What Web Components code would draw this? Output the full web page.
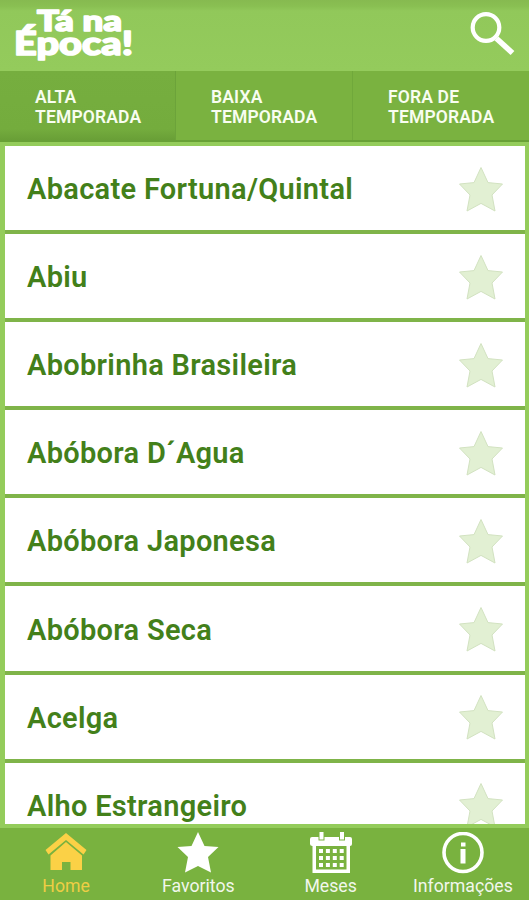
<!DOCTYPE html>
<html lang="pt-BR">
<head>
<meta charset="utf-8">
<title>Tá na Época!</title>
<style>
    body {
        margin: 0;
        font-family: Roboto, "Liberation Sans", sans-serif;
    }
</style>
</head>
<body>
<x-app>
    <x-header slot="top"></x-header>
    <x-tabs slot="top">
        <x-tab active>ALTA<br>TEMPORADA</x-tab>
        <x-tab>BAIXA<br>TEMPORADA</x-tab>
        <x-tab>FORA DE<br>TEMPORADA</x-tab>
    </x-tabs>
    <x-row>Abacate Fortuna/Quintal</x-row>
    <x-row>Abiu</x-row>
    <x-row>Abobrinha Brasileira</x-row>
    <x-row>Abóbora D´Agua</x-row>
    <x-row>Abóbora Japonesa</x-row>
    <x-row>Abóbora Seca</x-row>
    <x-row>Acelga</x-row>
    <x-row>Alho Estrangeiro</x-row>
    <x-nav slot="bottom">
        <x-nav-item icon="home" active>Home</x-nav-item>
        <x-nav-item icon="star">Favoritos</x-nav-item>
        <x-nav-item icon="calendar">Meses</x-nav-item>
        <x-nav-item icon="info">Informações</x-nav-item>
    </x-nav>
</x-app>

<script>
const STAR = 'M22 0.5 L29 15.6 L43.5 17 L33 28 L36 44 L22 36.4 L8 44 L11 28 L0.5 17 L15 15.6 Z';

const ICONS = {
    home: `
        <path d="M22 1 L42.5 18 L39.5 22.4 L22 8 L4.5 22.4 L1.5 18 Z" fill="currentColor"/>
        <path d="M22 10 L38 23.4 V38 H26.5 V30 H18 V38 H6.5 V23.4 Z" fill="currentColor"/>`,
    star: `<path d="M22 0 L28.5 14 L42.5 15 L32 25 L35 40.5 L22 34 L9 40.5 L12 25 L1.5 15 L15.5 14 Z" fill="currentColor"/>`,
    calendar: `
        <path fill="currentColor" fill-rule="evenodd" d="M3 5 H9.5 V8.5 H15.5 V5 H30 V8.5 H36 V5 H41 Q43 5 43 7 V12 Q43 14 41 14 V41 H3.5 V14 Q1 14 1 12 V7 Q1 5 3 5 Z M7 14 V37.5 H37.5 V14 Z"/>
        <path fill="currentColor" d="M10.5 0 H14.5 V7.5 H10.5 Z M31 0 H35 V7.5 H31 Z"/>
        <path stroke="currentColor" stroke-width="4" stroke-dasharray="4 2.9" d="M10 19 H34.7 M10 26 H34.7 M10 33 H34.7"/>`,
    info: `
        <circle cx="22" cy="20.5" r="19" fill="none" stroke="currentColor" stroke-width="3.6"/>
        <path fill="currentColor" d="M20 10.5 H24.5 V14.5 H20 Z M19.5 17 H24.5 V31.5 H19.5 Z"/>`
};

class App extends HTMLElement {
    constructor() {
        super();
        this.attachShadow({ mode: 'open' });
    }
    connectedCallback() {
        this.shadowRoot.innerHTML = `
            <style>
                :host {
                    display: flex;
                    flex-direction: column;
                    height: 900px;
                    overflow: hidden;
                    background: #94cc5b;
                }
                .list {
                    flex: 1;
                    min-height: 0;
                    overflow: hidden;
                    display: flex;
                    flex-direction: column;
                    margin: 4px 4px 4px 5px;
                    background: #7bb044;
                }
            </style>
            <slot name="top"></slot>
            <div class="list"><slot></slot></div>
            <slot name="bottom"></slot>
        `;
    }
}

class Header extends HTMLElement {
    constructor() {
        super();
        this.attachShadow({ mode: 'open' });
    }
    connectedCallback() {
        this.shadowRoot.innerHTML = `
            <style>
                :host {
                    display: flex;
                    flex: none;
                    justify-content: space-between;
                    height: 71px;
                    background: linear-gradient(#86ba50 0, #89bf52 6px, #91c85a 11px, #94cb5c 100%);
                }
                svg { display: block; }
                text {
                    font-family: Lato, sans-serif;
                    font-weight: 900;
                    fill: #fff;
                    stroke: #fff;
                    stroke-width: 1.6;
                    stroke-linejoin: round;
                }
            </style>
            <svg width="150" height="71">
                <text x="37" y="30.5" font-size="29" textLength="85" lengthAdjust="spacingAndGlyphs">Tá na</text>
                <text x="14" y="54.500" font-size="32" textLength="119" lengthAdjust="spacingAndGlyphs">Época!</text>
            </svg>
            <svg width="64" height="71" fill="none" stroke="#fff">
                <circle cx="21" cy="27.5" r="13.3" stroke-width="4.2"/>
                <path d="M31.5 38.5 L47.5 53" stroke-width="5.5"/>
            </svg>
        `;
    }
}

class Tabs extends HTMLElement {
    constructor() {
        super();
        this.attachShadow({ mode: 'open' });
    }
    connectedCallback() {
        this.shadowRoot.innerHTML = `
            <style>
                :host {
                    display: grid;
                    flex: none;
                    grid-template-columns: 176px 177px 176px;
                    box-sizing: border-box;
                    height: 71px;
                    background: #7ab240;
                    border-bottom: 2px solid #68a136;
                }
            </style>
            <slot></slot>
        `;
    }
}

class Tab extends HTMLElement {
    constructor() {
        super();
        this.attachShadow({ mode: 'open' });
    }
    connectedCallback() {
        this.shadowRoot.innerHTML = `
            <style>
                :host {
                    display: block;
                    box-sizing: border-box;
                    padding: 16px 0 0 35px;
                    border-right: 1px solid #70a83b;
                    color: #f8fdf0;
                    font-size: 17.5px;
                    font-weight: 600;
                    letter-spacing: .15px;
                    line-height: 20px;
                    white-space: nowrap;
                }
                :host([active]) {
                    background: linear-gradient(#76ae3f 0, #74ac3d 58px, #699f37 69px);
                    border-right-color: #6ca33a;
                }
                :host(:last-child) { border-right: 0; }
            </style>
            <slot></slot>
        `;
    }
}

class Row extends HTMLElement {
    constructor() {
        super();
        this.attachShadow({ mode: 'open' });
    }
    connectedCallback() {
        this.shadowRoot.innerHTML = `
            <style>
                :host {
                    display: flex;
                    flex: none;
                    align-items: center;
                    justify-content: space-between;
                    box-sizing: border-box;
                    height: 88.1px;
                    padding: 0 22px;
                    background: #fff;
                    border-bottom: 4px solid #7fb449;
                    color: #43801a;
                    font-size: 29px;
                    font-weight: 600;
                    letter-spacing: .3px;
                    white-space: nowrap;
                }
                span { margin-top: 2px; }
                svg {
                    flex: none;
                    margin-top: 3px;
                }
            </style>
            <span><slot></slot></span>
            <svg width="44" height="46"><path d="${STAR}" fill="#e2f0d3" stroke="#d2e2c1"/></svg>
        `;
    }
}

class Nav extends HTMLElement {
    constructor() {
        super();
        this.attachShadow({ mode: 'open' });
    }
    connectedCallback() {
        this.shadowRoot.innerHTML = `
            <style>
                :host {
                    display: grid;
                    flex: none;
                    grid-template-columns: repeat(4, 1fr);
                    height: 72px;
                    background: #79b23f;
                }
            </style>
            <slot></slot>
        `;
    }
}

class NavItem extends HTMLElement {
    constructor() {
        super();
        this.attachShadow({ mode: 'open' });
    }
    connectedCallback() {
        this.shadowRoot.innerHTML = `
            <style>
                :host {
                    display: flex;
                    flex-direction: column;
                    align-items: center;
                    padding-top: 4px;
                    color: #fff;
                }
                :host([active]) { color: #fbd146; }
                span {
                    margin-top: 1px;
                    font-size: 17.7px;
                    line-height: 22px;
                    opacity: .9;
                }
            </style>
            <svg width="44" height="42">${ICONS[this.getAttribute('icon')]}</svg>
            <span><slot></slot></span>
        `;
    }
}

customElements.define('x-app', App);
customElements.define('x-header', Header);
customElements.define('x-tabs', Tabs);
customElements.define('x-tab', Tab);
customElements.define('x-row', Row);
customElements.define('x-nav', Nav);
customElements.define('x-nav-item', NavItem);
</script>
</body>
</html>
